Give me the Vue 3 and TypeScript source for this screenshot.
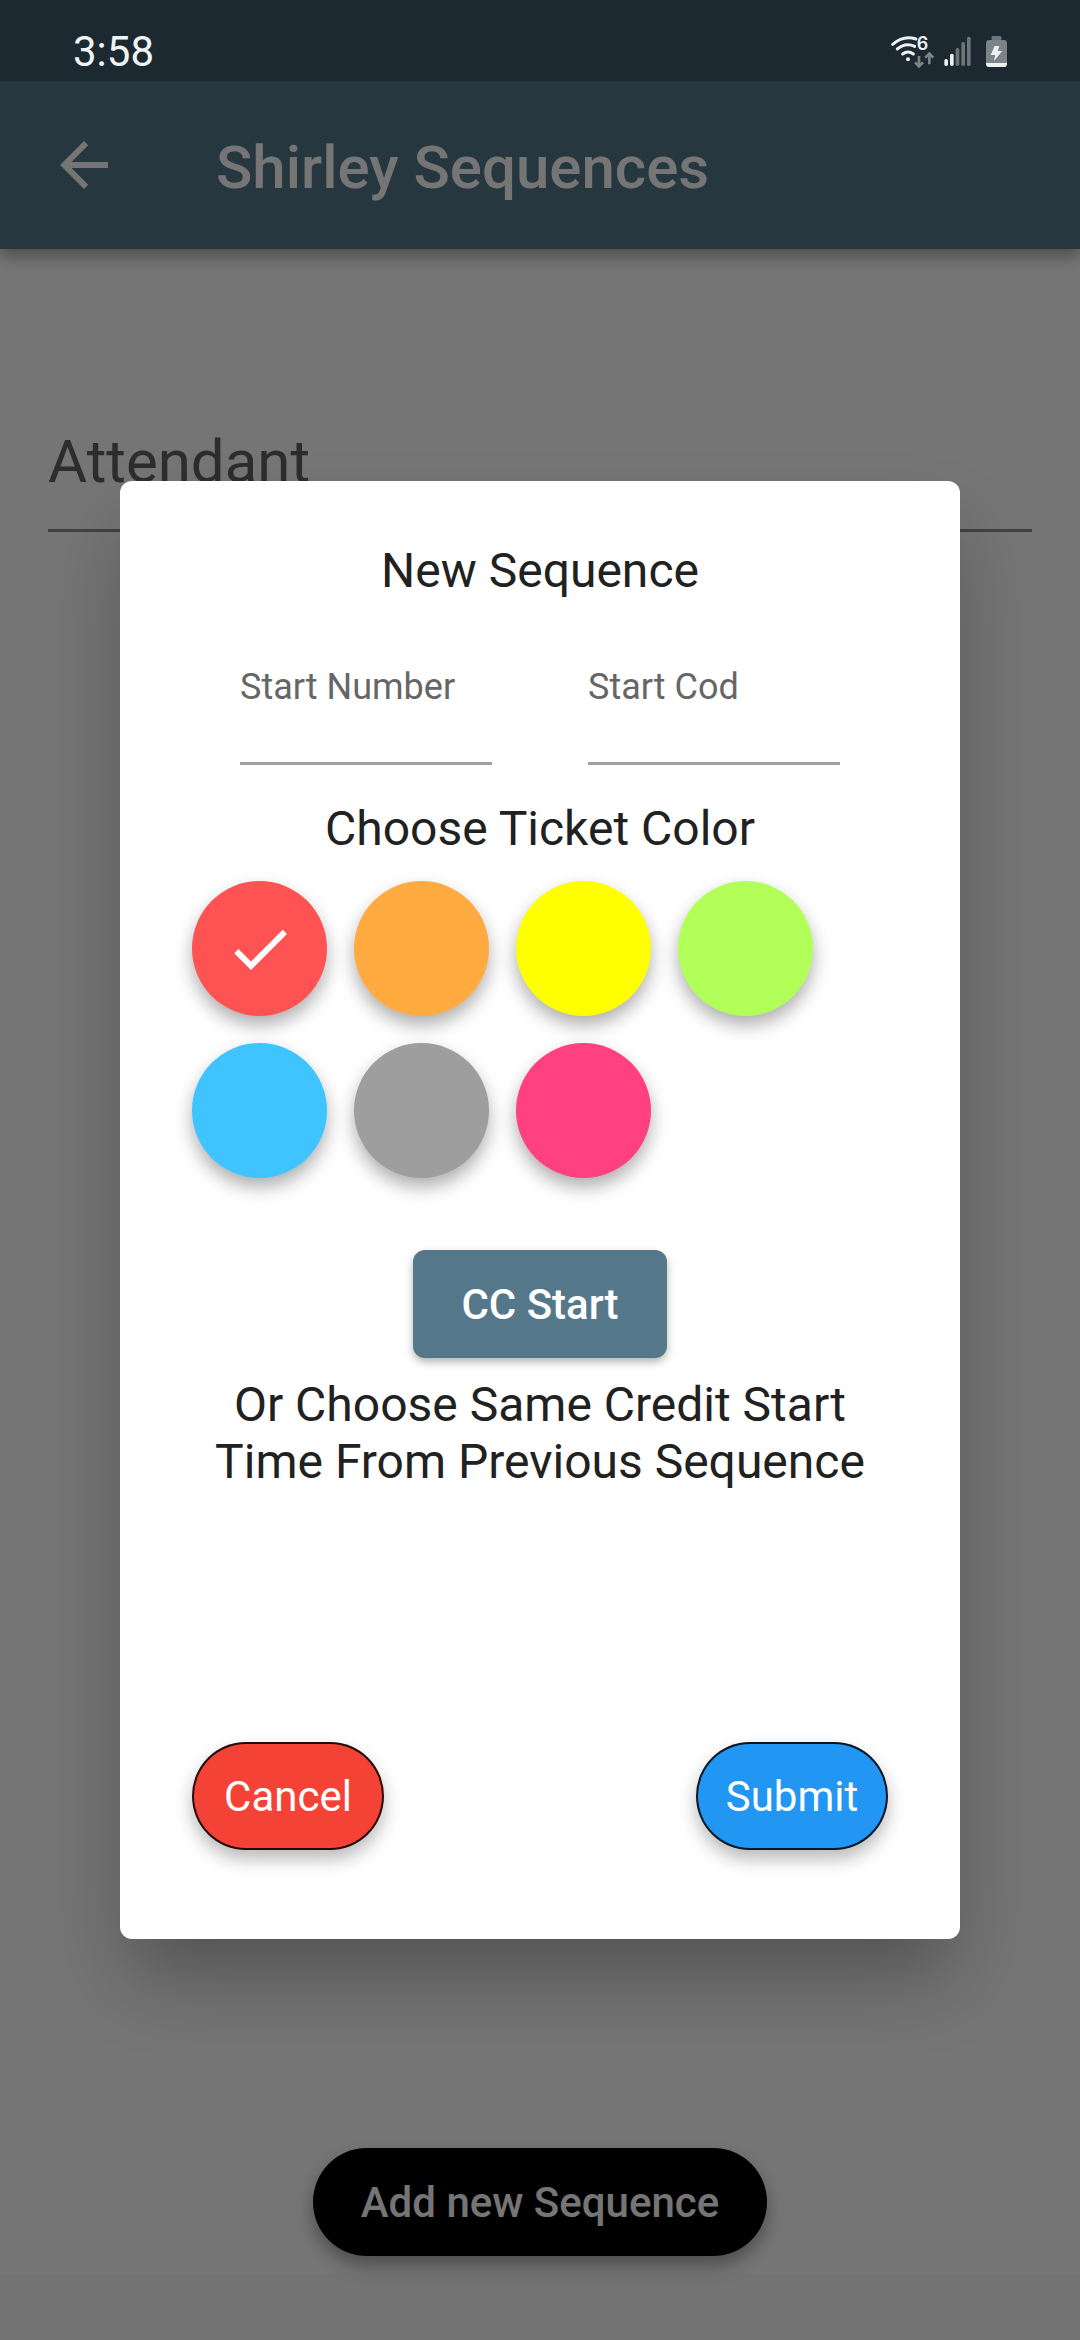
<script setup lang="ts">
import { ref } from 'vue'

interface TicketColor {
  name: string
  value: string
}

const ticketColors: TicketColor[] = [
  { name: 'Red', value: '#ff5252' },
  { name: 'Orange', value: '#ffab40' },
  { name: 'Yellow', value: '#ffff00' },
  { name: 'Green', value: '#b2ff59' },
  { name: 'Blue', value: '#40c4ff' },
  { name: 'Grey', value: '#9e9e9e' },
  { name: 'Pink', value: '#ff4081' },
]

const attendant = ref('')
const startNumber = ref('')
const startCode = ref('')
const selectedColor = ref('Red')
</script>

<template>
  <div class="screen">
    <div class="status-bar">
      <span class="clock">3:58</span>
      <div class="status-icons">
        <svg class="wifi" viewBox="90 85 135 135" aria-hidden="true">
          <g fill="none" stroke="#eef1f2" stroke-width="9" stroke-linecap="round">
            <path d="M98 131 Q131 102 168 115" />
            <path d="M112 145 Q136 124 164 137" />
            <path d="M128 160 Q144 148 160 160" />
          </g>
          <circle cx="144" cy="176" r="6" fill="#eef1f2" />
          <text x="170" y="149" class="wifi-gen">6</text>
          <g fill="none" stroke="#7c8488" stroke-width="8">
            <path d="M177 166 V197 M165 185 L177 197 L189 185" />
            <path d="M208 191 V160 M196 171 L208 159 L220 171" />
          </g>
        </svg>
        <svg class="signal" viewBox="249 105 87 93" aria-hidden="true">
          <g fill="#eef1f2">
            <rect x="253" y="174" width="11" height="21" rx="5" />
            <rect x="270" y="158" width="11" height="37" rx="5" />
          </g>
          <g fill="#6c757a">
            <rect x="287" y="141" width="11" height="54" rx="5" />
            <rect x="304" y="123" width="11" height="72" rx="5" />
            <rect x="321" y="107" width="11" height="88" rx="5" />
          </g>
        </svg>
        <svg class="battery" viewBox="378 105 63 93" aria-hidden="true">
          <path d="M395 118 V109 Q395 105 399 105 H420 Q424 105 424 109 V118 Z" fill="#6c757a" />
          <path d="M388 117 H431 Q441 117 441 127 V186 H378 V127 Q378 117 388 117 Z" fill="#7c8488" />
          <path d="M378 186 H441 V188 Q441 198 431 198 H388 Q378 198 378 188 Z" fill="#eef1f2" />
          <path d="M404 135 H418 L413 150 H427 L401 181 L406 162 H392 Z" fill="#eef1f2" />
        </svg>
      </div>
    </div>

    <header class="app-bar">
      <button class="back" type="button" aria-label="Back">
        <svg viewBox="0 0 24 24" aria-hidden="true">
          <path fill="#fff" d="M20 11H7.83l5.59-5.59L12 4l-8 8 8 8 1.41-1.41L7.83 13H20v-2z" />
        </svg>
      </button>
      <h1>Shirley Sequences</h1>
    </header>

    <main class="page">
      <input v-model="attendant" class="attendant" type="text" placeholder="Attendant" aria-label="Attendant" />
      <button class="add" type="button">Add new Sequence</button>
    </main>
    <div class="nav-area"></div>

    <div class="scrim">
      <form class="dialog" role="dialog" aria-labelledby="dialog-title" @submit.prevent>
        <h2 id="dialog-title">New Sequence</h2>

        <div class="fields">
          <div class="field">
            <label for="start-number">Start Number</label>
            <input id="start-number" v-model="startNumber" type="text" />
          </div>
          <div class="field">
            <label for="start-code">Start Cod</label>
            <input id="start-code" v-model="startCode" type="text" />
          </div>
        </div>

        <h2 id="color-title" class="color-title">Choose Ticket Color</h2>
        <div class="swatches" role="radiogroup" aria-labelledby="color-title">
          <label v-for="color in ticketColors" :key="color.name" class="swatch" :style="{ backgroundColor: color.value }">
            <input v-model="selectedColor" type="radio" name="ticket-color" :value="color.name" :aria-label="color.name" />
            <svg v-if="selectedColor === color.name" viewBox="0 0 24 24" aria-hidden="true">
              <path fill="#fff" d="M9 16.17L4.83 12l-1.42 1.41L9 19 21 7l-1.41-1.41z" />
            </svg>
          </label>
        </div>

        <button class="cc-start" type="button">CC Start</button>
        <p class="hint">Or Choose Same Credit Start Time From Previous Sequence</p>
        <div class="previous"></div>

        <div class="actions">
          <button class="pill cancel" type="button">Cancel</button>
          <button class="pill submit" type="submit">Submit</button>
        </div>
      </form>
    </div>
  </div>
</template>

<style>
body {
  margin: 0;
}
</style>

<style scoped>
.screen {
  position: relative;
  display: flex;
  flex-direction: column;
  min-height: 100vh;
  background: #fff;
  font-family: Roboto, "Liberation Sans", sans-serif;
}

.screen *,
.screen {
  box-sizing: border-box;
}

button,
input {
  margin: 0;
  border: 0;
  font-family: inherit;
}

button {
  padding: 0;
  cursor: pointer;
}

h1,
h2,
p {
  margin: 0;
}

/* Stays bright above the scrim */
.status-bar {
  position: relative;
  z-index: 2;
  display: flex;
  align-items: center;
  justify-content: space-between;
  height: 81px;
  padding: 21px 73px 0;
  background: #1d2931;
}

.clock {
  padding-top: 2px;
  color: #f1f4f5;
  font-size: 42px;
  line-height: 50px;
}

.status-icons {
  display: flex;
  align-items: center;
}

.wifi {
  width: 45px;
  height: 45px;
  margin-right: 8px;
}

.wifi-gen {
  fill: #eef1f2;
  font-family: Inter, sans-serif;
  font-size: 54px;
  font-weight: 600;
}

.signal {
  width: 29px;
  height: 31px;
  margin-right: 14px;
}

.battery {
  width: 21px;
  height: 31px;
}

.app-bar {
  position: relative;
  display: flex;
  align-items: center;
  gap: 96px;
  height: 168px;
  padding: 0 48px;
  background: #54788a;
  box-shadow: 0 8px 14px rgba(0, 0, 0, 0.32);
}

.back {
  width: 72px;
  height: 72px;
  background: none;
}

.back svg {
  display: block;
  width: 72px;
  height: 72px;
}

.app-bar h1 {
  padding-top: 6px;
  color: #fff;
  font-size: 60px;
  font-weight: 500;
  line-height: 70px;
}

.page {
  flex: 1;
  display: flex;
  flex-direction: column;
  align-items: center;
  justify-content: space-between;
  padding: 177px 48px 18px;
}

.attendant {
  width: 100%;
  height: 106px;
  padding: 0 0 32px;
  border-bottom: 3px solid #919191;
  border-radius: 0;
  background: none;
  color: #212121;
  font-size: 60px;
}

.attendant::placeholder {
  color: #636363;
  opacity: 1;
}

.add {
  height: 108px;
  padding: 0 48px;
  border-radius: 54px;
  background: #000;
  box-shadow: 0 9px 18px rgba(0, 0, 0, 0.35);
  color: #fff;
  font-size: 42px;
  font-weight: 500;
}

.nav-area {
  height: 66px;
  background: rgba(0, 0, 0, 0.02);
}

.scrim {
  position: absolute;
  inset: 0;
  z-index: 1;
  display: flex;
  align-items: center;
  padding: 80px 120px 0;
  background: rgba(0, 0, 0, 0.54);
}

.dialog {
  display: flex;
  flex: 1;
  flex-direction: column;
  padding: 61px 72px 89px;
  border-radius: 12px;
  background: #fff;
  box-shadow: 0 45px 80px -10px rgba(0, 0, 0, 0.3);
  color: #212121;
}

h2,
.hint {
  font-size: 48px;
  font-weight: 400;
  line-height: 57px;
  text-align: center;
}

.fields {
  display: flex;
  gap: 96px;
  padding: 67px 48px 0;
}

.field {
  display: flex;
  flex: 1;
  flex-direction: column;
  min-width: 0;
}

.field label {
  color: #666;
  font-size: 36px;
  line-height: 42px;
}

.field input {
  width: 100%;
  height: 57px;
  padding: 0;
  border-bottom: 3px solid #a0a0a0;
  border-radius: 0;
  background: none;
  font-size: 42px;
}

.color-title {
  margin-top: 35px;
}

.swatches {
  display: flex;
  flex-wrap: wrap;
  gap: 27px;
  margin-top: 24px;
}

.swatch {
  display: grid;
  place-items: center;
  width: 135px;
  height: 135px;
  border-radius: 50%;
  box-shadow: 0 9px 18px rgba(0, 0, 0, 0.32);
  cursor: pointer;
}

.swatch input,
.swatch svg {
  grid-area: 1 / 1;
  width: 72px;
  height: 72px;
}

.swatch input {
  appearance: none;
}

.cc-start {
  align-self: center;
  height: 108px;
  margin-top: 72px;
  padding: 0 48px;
  border-radius: 12px;
  background: #54788a;
  box-shadow: 0 4px 8px rgba(0, 0, 0, 0.3);
  color: #fff;
  font-size: 42px;
  font-weight: 500;
}

.hint {
  margin-top: 18px;
}

/* Room for the list of earlier sequences, empty until one exists */
.previous {
  min-height: 252px;
}

.actions {
  display: flex;
  justify-content: space-between;
}

.pill {
  width: 192px;
  height: 108px;
  border: 2px solid rgba(0, 0, 0, 0.85);
  border-radius: 54px;
  box-shadow: 0 9px 18px rgba(0, 0, 0, 0.28);
  color: #fff;
  font-size: 42px;
}

.cancel {
  background: #f44336;
}

.submit {
  background: #2196f3;
}
</style>
